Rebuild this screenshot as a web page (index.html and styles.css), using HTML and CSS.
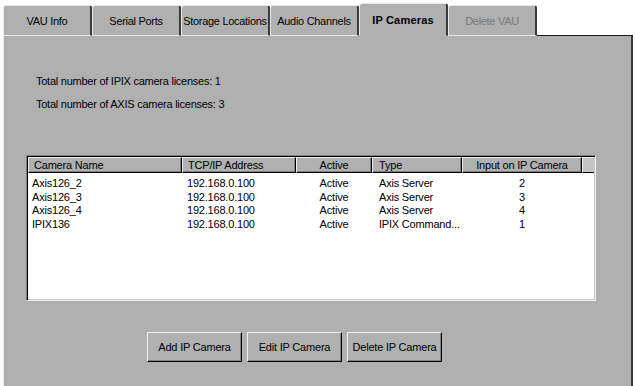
FILE: index.html
```html
<!DOCTYPE html>
<html>
<head>
<meta charset="utf-8">
<link rel="stylesheet" href="styles.css">
</head>
<body>
<div class="dialog">
  <div class="tabs">
    <div class="tab">VAU Info</div>
    <div class="tab">Serial Ports</div>
    <div class="tab">Storage Locations</div>
    <div class="tab">Audio Channels</div>
    <div class="tab active">IP Cameras</div>
    <div class="tab disabled">Delete VAU</div>
    <div class="tab-fill"></div>
  </div>
  <div class="panel">
    <p class="info first">Total number of IPIX camera licenses: 1</p>
    <p class="info">Total number of AXIS camera licenses: 3</p>
    <div class="list">
      <div class="list-head">
        <div class="hcell left">Camera Name</div>
        <div class="hcell left">TCP/IP Address</div>
        <div class="hcell center">Active</div>
        <div class="hcell left type">Type</div>
        <div class="hcell center">Input on IP Camera</div>
        <div class="hcell filler"></div>
      </div>
      <div class="list-body">
        <div class="row"><span class="c1">Axis126_2</span><span class="c2">192.168.0.100</span><span class="c3">Active</span><span class="c4">Axis Server</span><span class="c5">2</span></div>
        <div class="row"><span class="c1">Axis126_3</span><span class="c2">192.168.0.100</span><span class="c3">Active</span><span class="c4">Axis Server</span><span class="c5">3</span></div>
        <div class="row"><span class="c1">Axis126_4</span><span class="c2">192.168.0.100</span><span class="c3">Active</span><span class="c4">Axis Server</span><span class="c5">4</span></div>
        <div class="row"><span class="c1">IPIX136</span><span class="c2">192.168.0.100</span><span class="c3">Active</span><span class="c4">IPIX Command...</span><span class="c5">1</span></div>
      </div>
    </div>
    <div class="buttons">
      <button class="btn">Add IP Camera</button>
      <button class="btn">Edit IP Camera</button>
      <button class="btn">Delete IP Camera</button>
    </div>
  </div>
</div>
</body>
</html>
```
FILE: styles.css
```css
* { box-sizing: border-box; }
html, body {
  margin: 0;
  padding: 0;
  background: #ffffff;
  overflow: hidden;
}
body {
  font-family: "Liberation Sans", Arial, sans-serif;
  font-size: 11px;
  color: #000;
}
.dialog {
  padding: 3px 0 0 3px;
  width: 633px;
}
.tabs {
  display: flex;
  align-items: flex-end;
  height: 33px;
}
.tab {
  width: 89px;
  height: 31px;
  background: #b0b0b0;
  border-top: 1px solid #e8e8e8;
  border-left: 1px solid #e8e8e8;
  border-right: 2px solid #3a3a3a;
  border-bottom: 1px solid #e8e8e8;
  border-radius: 3px 3px 0 0;
  display: flex;
  align-items: center;
  justify-content: center;
  padding-top: 1px;
  letter-spacing: -0.3px;
  white-space: nowrap;
}
.tab.active {
  height: 33px;
  font-weight: bold;
  font-size: 11px;
  letter-spacing: 0.2px;
  border-bottom-color: #b0b0b0;
  padding-top: 0;
}
.tab.disabled {
  color: #7a7a7a;
}
.tab-fill {
  flex: 1;
  border-bottom: 1px solid #1a1a1a;
  height: 1px;
}
.panel {
  background: #b0b0b0;
  border-left: 1px solid #e8e8e8;
  border-right: 2px solid #3a3a3a;
  height: 360px;
  padding: 39px 0 0 22px;
}
.info {
  margin: 0 0 10px 10px;
  line-height: 13px;
  letter-spacing: -0.25px;
}
.list {
  margin-top: 44px;
  width: 570px;
  height: 146px;
  background: #ffffff;
  border-top: 1px solid #808080;
  border-left: 1px solid #808080;
  border-right: 1px solid #f0f0f0;
  border-bottom: 1px solid #f0f0f0;
  box-shadow: inset 1px 1px 0 #000, inset -1px -1px 0 #c8c8c8;
  padding: 1px;
  letter-spacing: -0.2px;
}
.list-head {
  display: grid;
  grid-template-columns: 154px 114px 76px 90px 120px 12px;
  height: 16px;
}
.hcell {
  background: #b0b0b0;
  border-top: 1px solid #f0f0f0;
  border-left: 1px solid #f0f0f0;
  border-right: 1px solid #000;
  border-bottom: 1px solid #000;
  box-shadow: inset -1px -1px 0 #808080;
  line-height: 14px;
  white-space: nowrap;
  overflow: hidden;
}
.hcell.left { padding-left: 5px; }
.hcell.type { padding-left: 6px; }
.hcell.center { text-align: center; }
.hcell.filler {
  background: #c4c4c4;
  border-right: none;
  box-shadow: none;
}
.list-body {
  padding-top: 4px;
}
.row {
  display: grid;
  grid-template-columns: 154px 114px 76px 90px 120px;
  line-height: 13.7px;
}
.row span { white-space: nowrap; }
.c1 { padding-left: 4px; }
.c2 { padding-left: 5px; }
.c3 { text-align: center; }
.c4 { padding-left: 7px; }
.c5 { text-align: center; }
.buttons {
  display: flex;
  gap: 5px;
  margin: 31px 0 0 121px;
}
.btn {
  width: 95px;
  height: 30px;
  background: #b0b0b0;
  font-family: "Liberation Sans", Arial, sans-serif;
  font-size: 11px;
  letter-spacing: -0.2px;
  color: #000;
  border-top: 1px solid #f0f0f0;
  border-left: 1px solid #f0f0f0;
  border-right: 1px solid #000;
  border-bottom: 1px solid #000;
  box-shadow: inset -1px -1px 0 #808080;
  padding: 0;
}
```
